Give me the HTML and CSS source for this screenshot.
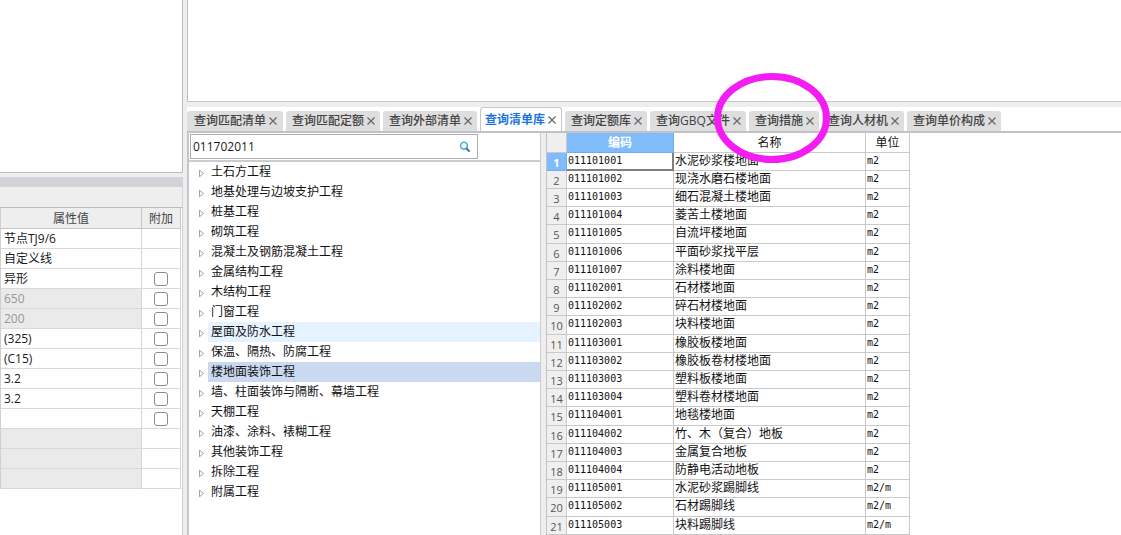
FILE: index.html
```html
<!DOCTYPE html>
<html lang="zh-CN">
<head>
<meta charset="utf-8">
<title>查询清单库</title>
<link rel="stylesheet" href="styles.css">
</head>
<body>
<div class="app">
  <aside class="side">
    <div class="side-top"></div>
    <div class="side-title"></div>
    <div class="side-tools"></div>
    <div class="side-body">
      <table class="props">
        <thead><tr><th>属性值</th><th class="extra">附加</th></tr></thead>
        <tbody id="props"></tbody>
      </table>
    </div>
  </aside>
  <main class="main">
    <div class="canvas"></div>
    <nav class="tabs" id="tabs"></nav>
    <div class="content">
      <section class="catalog">
        <div class="search-bar">
          <div class="search">
            <input type="text" value="011702011" aria-label="搜索">
            <button type="button" aria-label="查询">
              <svg width="12" height="12" viewBox="0 0 12 12"><circle cx="5" cy="4.7" r="3.4" fill="#eef8fc" stroke="#5aa9d0" stroke-width="1.6"/><path d="M7.5 7.5L10 10" stroke="#2f7fb5" stroke-width="2" stroke-linecap="round"/></svg>
            </button>
          </div>
        </div>
        <ul class="tree" id="tree"></ul>
      </section>
      <section class="list">
        <table class="grid">
          <thead><tr><th class="num"></th><th class="code">编码</th><th class="name">名称</th><th class="unit">单位</th></tr></thead>
          <tbody id="rows"></tbody>
        </table>
      </section>
    </div>
  </main>
  <svg class="mark" width="118" height="92" viewBox="0 0 118 92" aria-hidden="true"><ellipse cx="59" cy="46" rx="54.5" ry="41.5" fill="none" stroke="#f31df3" stroke-width="7"/></svg>
</div>
<script src="app.js"></script>
</body>
</html>
```

FILE: styles.css
```css
* { box-sizing: border-box; }

body {
  margin: 0;
  font: 12px/20px "Open Sans", "Noto Sans CJK SC", sans-serif;
  color: #1a1a1a;
  background: #eeeeee;
}

button, input { font: inherit; color: inherit; }

button {
  padding: 0;
  border: 0;
  background: none;
}

table {
  border-collapse: separate;
  border-spacing: 0;
  table-layout: fixed;
}

.app {
  position: relative;
  display: flex;
  gap: 4px;
  height: 100vh;
  overflow: hidden;
}

/* Property panel */
.side {
  display: flex;
  flex-direction: column;
  flex: 0 0 183px;
}

.side-top {
  flex: 0 0 173px;
  margin-bottom: 4px;
  background: #fff;
  border-right: 1px solid #bdbdbd;
  border-bottom: 1px solid #bdbdbd;
}

.side-title {
  flex: 0 0 10px;
  background: #d2d3d9;
}

.side-tools {
  flex: 0 0 20px;
  border-right: 1px solid #d4d4d4;
}

.side-body {
  flex: 1;
  background: #fff;
  border-top: 1px solid #bdbdbd;
  border-right: 1px solid #d0d0d0;
}

.props {
  width: 181px;
  border-left: 1px solid #d0d0d0;
}

.props th, .props td {
  height: 20px;
  padding: 0 3px;
  line-height: 19px;
  font-weight: 400;
  text-align: left;
  border-right: 1px solid #d4d4d4;
  border-bottom: 1px solid #d9d9d9;
}

.props th {
  height: 21px;
  text-align: center;
  color: #444;
  background: #eeeeee;
  border-color: #c6c6c6;
}

.props .extra {
  width: 39px;
  padding: 0;
  text-align: center;
}

.props .off {
  color: #999;
  background: #eaeaea;
}

.props input {
  appearance: none;
  display: block;
  width: 14px;
  height: 14px;
  margin: 0 auto;
  background: #fff;
  border: 1px solid #8c8c8c;
  border-radius: 3px;
}

/* Query area */
.main {
  display: flex;
  flex-direction: column;
  flex: 1;
  min-width: 0;
}

.canvas {
  flex: 0 0 102px;
  margin-bottom: 5px;
  background: #fff;
  border-left: 1px solid #bfbfbf;
  border-bottom: 1px solid #c6c6c6;
}

.tabs {
  display: flex;
  align-items: flex-end;
  gap: 3px;
  flex: 0 0 26px;
  background: #fff;
  border-bottom: 2px solid #c1c2c6;
}

.tab {
  display: flex;
  align-items: center;
  gap: 3px;
  height: 20px;
  padding: 0 5px 0 6px;
  color: #444;
  background: #dedede;
  border-radius: 3px 3px 0 0;
  white-space: nowrap;
  font-weight: 500;
}

.tab:first-child { padding: 0 6px 0 7px; }

.tab button { display: block; }

.tab.active {
  height: 24px;
  padding: 0 5px 0 4px;
  color: #1c74dc;
  background: #fff;
  border: 1px solid #c4c6ca;
  border-bottom: 0;
  font-weight: 700;
}

.content {
  display: flex;
  gap: 5px;
  flex: 1;
  min-height: 0;
}

.catalog {
  flex: 0 0 354px;
  background: #fff;
  border-left: 2px solid #c3c6cb;
  border-right: 1px solid #d0d0d0;
}

.search-bar {
  padding: 1px 0 1px 1px;
  border-bottom: 2px solid #c9ccd1;
}

.search {
  display: flex;
  align-items: center;
  width: 288px;
  height: 25px;
  padding-right: 6px;
  border: 1px solid #adadad;
}

.search input {
  flex: 1;
  min-width: 0;
  padding: 0 2px;
  border: 0;
  outline: 0;
  background: none;
}

.search button {
  display: flex;
}

.tree {
  margin: 0;
  padding: 0;
  list-style: none;
  color: #111;
}

.tree li {
  display: flex;
  align-items: center;
  height: 20px;
  padding-left: 9px;
}

.tree button {
  display: flex;
  flex: 0 0 10px;
  padding-top: 2px;
}

.tree span {
  flex: 1;
  padding-left: 3px;
}

.tree .hover span { background: #e5f2ff; }
.tree .selected span { background: #cad9f0; }

.list {
  flex: 1;
  min-width: 0;
  background: #fff;
}

.grid {
  width: 364px;
  color: #111;
  border-left: 1px solid #c4c4c4;
}

.grid th, .grid td {
  height: 18px;
  padding: 0 1px;
  line-height: 16px;
  text-align: left;
  vertical-align: top;
  font-weight: 400;
  border-right: 1px solid #c9c9c9;
  border-bottom: 1px solid #c9c9c9;
  white-space: nowrap;
}

.grid tbody tr:nth-child(5n) > * { height: 19px; }

.grid thead th {
  height: 20px;
  line-height: 19px;
  text-align: center;
}

.grid .num {
  width: 20px;
  padding: 2px 0 0;
  font-size: 11px;
  line-height: 15px;
  text-align: center;
  color: #555;
  background: #efefef;
}

.grid .code { width: 107px; }
.grid .unit { width: 44px; }

.grid thead .code,
.grid .current .num {
  color: #fff;
  font-weight: 700;
  background: #80bbfa;
  border-color: #6fadf0;
}

.grid .mono {
  font-family: "DejaVu Sans Mono", monospace;
  font-size: 10px;
}

.grid .current .code {
  border-right: 2px solid #808080;
  border-bottom: 2px solid #808080;
}

/* Highlight ring around a tab */
.mark {
  position: absolute;
  left: 713px;
  top: 72px;
  pointer-events: none;
}
```

FILE: app.js
```js
const fill = (id, html) => { document.getElementById(id).innerHTML = html; };

const props = [
  ["节点TJ9/6", 0, 0], ["自定义线", 0, 0], ["异形", 1, 0], ["650", 1, 1], ["200", 1, 1],
  ["(325)", 1, 0], ["(C15)", 1, 0], ["3.2", 1, 0], ["3.2", 1, 0], ["", 1, 0],
  ["", 0, 1], ["", 0, 1], ["", 0, 1]
];
fill("props", props.map(([text, box, off]) =>
  `<tr><td class="${off ? "off" : ""}">${text}</td><td class="extra">${box ? `<input type="checkbox" aria-label="附加 ${text}">` : ""}</td></tr>`
).join(""));

const tabs = ["查询匹配清单", "查询匹配定额", "查询外部清单", "查询清单库", "查询定额库", "查询GBQ文件", "查询措施", "查询人材机", "查询单价构成"];
fill("tabs", tabs.map((text, i) =>
  `<div class="tab${i === 3 ? " active" : ""}"><button type="button">${text}</button><button type="button" aria-label="关闭${text}"><svg width="8" height="8" viewBox="0 0 8 8" style="display:block"><path d="M.5.5l7 7M7.5.5l-7 7" stroke="#666" stroke-width="1.2"/></svg></button></div>`
).join(""));

const tree = ["土石方工程", "地基处理与边坡支护工程", "桩基工程", "砌筑工程", "混凝土及钢筋混凝土工程", "金属结构工程", "木结构工程", "门窗工程", "屋面及防水工程", "保温、隔热、防腐工程", "楼地面装饰工程", "墙、柱面装饰与隔断、幕墙工程", "天棚工程", "油漆、涂料、裱糊工程", "其他装饰工程", "拆除工程", "附属工程"];
const state = { 8: "hover", 10: "selected" };
fill("tree", tree.map((text, i) =>
  `<li class="${state[i] || ""}"><button type="button" aria-label="展开${text}"><svg width="7" height="9" viewBox="0 0 7 9"><path d="M1.5 1.2v6.6l4-3.3z" fill="#fff" stroke="#a0a0a0"/></svg></button><span>${text}</span></li>`
).join(""));

const rows = [
  ["011101001", "水泥砂浆楼地面"], ["011101002", "现浇水磨石楼地面"], ["011101003", "细石混凝土楼地面"],
  ["011101004", "菱苦土楼地面"], ["011101005", "自流坪楼地面"], ["011101006", "平面砂浆找平层"],
  ["011101007", "涂料楼地面"], ["011102001", "石材楼地面"], ["011102002", "碎石材楼地面"],
  ["011102003", "块料楼地面"], ["011103001", "橡胶板楼地面"], ["011103002", "橡胶板卷材楼地面"],
  ["011103003", "塑料板楼地面"], ["011103004", "塑料卷材楼地面"], ["011104001", "地毯楼地面"],
  ["011104002", "竹、木（复合）地板"], ["011104003", "金属复合地板"], ["011104004", "防静电活动地板"],
  ["011105001", "水泥砂浆踢脚线"], ["011105002", "石材踢脚线"], ["011105003", "块料踢脚线"]
];
fill("rows", rows.map(([code, name], i) =>
  `<tr class="${i ? "" : "current"}"><th class="num">${i + 1}</th><td class="code mono">${code}</td><td>${name}</td><td class="mono">${i < 18 ? "m2" : "m2/m"}</td></tr>`
).join(""));
```
